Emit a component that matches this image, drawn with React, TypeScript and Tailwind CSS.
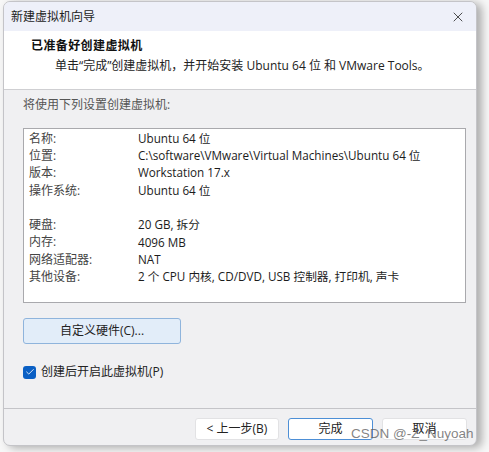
import { X, Check } from "lucide-react";

const rows: [string, string][] = [
  ["名称:", "Ubuntu 64 位"],
  ["位置:", "C:\\software\\VMware\\Virtual Machines\\Ubuntu 64 位"],
  ["版本:", "Workstation 17.x"],
  ["操作系统:", "Ubuntu 64 位"],
  ["", ""],
  ["硬盘:", "20 GB, 拆分"],
  ["内存:", "4096 MB"],
  ["网络适配器:", "NAT"],
  ["其他设备:", "2 个 CPU 内核, CD/DVD, USB 控制器, 打印机, 声卡"],
];

export default function App() {
  return (
    <div className="relative w-[489px] h-[452px] bg-[#f7f7f7] pl-[3px] pt-[1px] font-['Open_Sans','Noto_Sans_CJK_SC',sans-serif] text-[#1c1c1c]">
      <div className="w-[474px] h-[445px] flex flex-col rounded-[7px] border border-[#c4c4c8] bg-[#f0f0f2] overflow-hidden shadow-[5px_2px_8px_rgba(0,0,0,0.3)]">
        {/* title bar */}
        <div className="h-[29px] shrink-0 flex items-center justify-between pl-[7px] pr-[10px] bg-[#eef0f9]">
          <span className="text-[12px] text-[#222]">新建虚拟机向导</span>
          <X size={16} strokeWidth={1.3} className="text-[#333]" />
        </div>

        {/* header */}
        <div className="h-[59px] shrink-0 bg-white border-b border-[#cfcfd2] pl-[27px] pt-[6px]">
          <div className="text-[12px] font-bold tracking-[0.4px] leading-[18px] text-[#111]">已准备好创建虚拟机</div>
          <div className="pl-[24px] pt-[2px] text-[12px] leading-[18px] text-[#222]">
            单击“完成”创建虚拟机，并开始安装 Ubuntu 64 位 和 VMware Tools。
          </div>
        </div>

        {/* body */}
        <div className="flex-1 flex flex-col pl-[19px] pr-[10px] pt-[7px]">
          <div className="text-[12px] leading-[16px] text-[#555]">将使用下列设置创建虚拟机:</div>

          <div className="mt-[15px] w-[443px] h-[175px] bg-white border border-[#a9a9ad] pl-[5px] pt-[1px]">
            {rows.map(([k, v], i) => (
              <div key={i} className="flex h-[17.3px] items-center text-[12px]">
                <span className="w-[109px] text-[#444]">{k}</span>
                <span className="text-[11.7px] text-[#1c1c1c]">{v}</span>
              </div>
            ))}
          </div>

          <button className="mt-[15px] w-[158px] h-[26px] rounded-[3px] border border-[#8fb4dc] bg-[#e2edf9] text-[12px] text-[#222]">
            自定义硬件(C)...
          </button>

          <label className="mt-[19px] flex items-center gap-[5px] text-[12px] text-[#222]">
            <span className="w-[13px] h-[13px] rounded-[3px] bg-[#0a5fc4] flex items-center justify-center">
              <Check size={10} strokeWidth={2} className="text-white" />
            </span>
            创建后开启此虚拟机(P)
          </label>
        </div>

        {/* footer */}
        <div className="h-[37px] shrink-0 border-t border-[#c4c4c8] flex items-start justify-end gap-[9px] pr-[9px] pt-[9px]">
          <button className="w-[84px] h-[22px] rounded-[3px] bg-white border border-[#e2e2e4] text-[12px] text-[#222]">
            &lt; 上一步(B)
          </button>
          <button className="w-[85px] h-[22px] rounded-[3px] bg-white border border-[#4d8fd6] text-[12px] text-[#222]">
            完成
          </button>
          <button className="w-[85px] h-[22px] rounded-[3px] bg-white border border-[#e2e2e4] text-[12px] text-[#222]">
            取消
          </button>
        </div>
      </div>

      <div className="absolute left-[351px] top-[424px] text-[13.5px] font-['Liberation_Sans',sans-serif] text-[rgba(90,90,90,0.75)]">
        CSDN @-Z_Nuyoah
      </div>
    </div>
  );
}
